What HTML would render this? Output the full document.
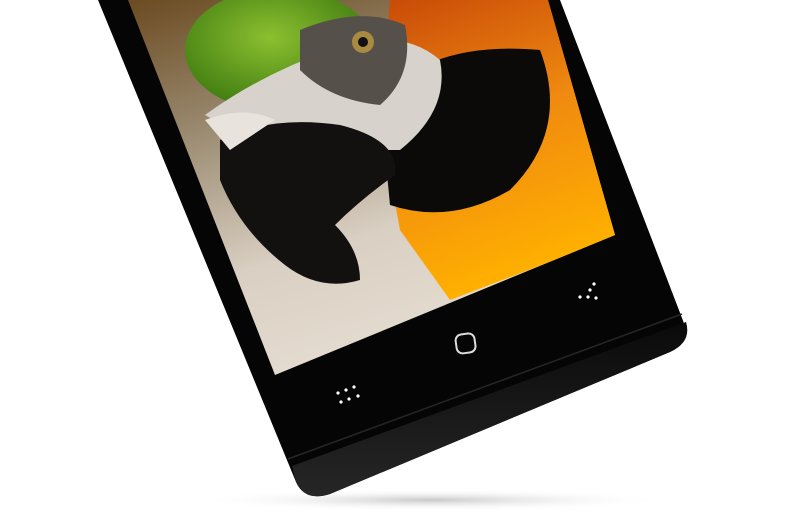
<!DOCTYPE html>
<html><head><style>
html,body{margin:0;padding:0;background:#fff;width:800px;height:525px;overflow:hidden}
</style></head><body>
<svg width="800" height="525" viewBox="0 0 800 525" xmlns="http://www.w3.org/2000/svg">
<defs>
<radialGradient id="sh" cx="0.5" cy="0.5" r="0.5"><stop offset="0" stop-color="#c8c8c8"/><stop offset="1" stop-color="#fff" stop-opacity="0"/></radialGradient>
<linearGradient id="bg" x1="0" y1="0" x2="0.4" y2="1"><stop offset="0" stop-color="#6a4a20"/><stop offset="0.35" stop-color="#9a8a70"/><stop offset="0.7" stop-color="#d9cfc2"/><stop offset="1" stop-color="#e6ddd2"/></linearGradient>
<linearGradient id="or" x1="0" y1="0" x2="0.3" y2="1"><stop offset="0" stop-color="#c84a08"/><stop offset="0.5" stop-color="#f08a10"/><stop offset="1" stop-color="#ffb000"/></linearGradient>
<radialGradient id="gr" cx="0.45" cy="0.4" r="0.6"><stop offset="0" stop-color="#8cc030"/><stop offset="1" stop-color="#3e7a10"/></radialGradient>
<linearGradient id="band" x1="0" y1="0" x2="0" y2="1"><stop offset="0" stop-color="#0a0a0a"/><stop offset="1" stop-color="#262626"/></linearGradient>
<clipPath id="scr"><polygon points="128,0 548,0 615,235 275,375"/></clipPath>
</defs>
<ellipse cx="430" cy="500" rx="240" ry="11" fill="url(#sh)"/>
<path d="M98,0 L560,0 L682,318 Q692,342 670,352 L330,494 Q305,502 296,482 Z" fill="#050505"/>
<path d="M292,466 L686,322 Q692,342 670,352 L330,494 Q305,502 296,482 Z" fill="url(#band)"/>
<path d="M288,459 L682,314" stroke="#262626" stroke-width="1.5"/>
<g clip-path="url(#scr)">
<rect x="120" y="0" width="500" height="380" fill="url(#bg)"/>
<polygon points="390,0 548,0 620,235 450,300 400,230 380,120" fill="url(#or)"/>
<path d="M380,100 Q430,40 540,50 Q570,130 510,190 Q450,225 390,205 Z" fill="#0c0a08"/>
<ellipse cx="280" cy="50" rx="95" ry="62" fill="url(#gr)"/>
<path d="M205,115 Q260,75 330,50 Q400,25 440,60 Q450,110 400,150 Q330,150 250,140 Z" fill="#d7d2cb"/>
<path d="M300,30 Q360,5 405,25 Q415,75 380,105 Q330,100 300,70 Z" fill="#55504a"/>
<circle cx="363" cy="42" r="11" fill="#a88a40"/><circle cx="363" cy="42" r="5" fill="#111"/>
<path d="M220,140 Q270,115 340,125 Q400,140 395,175 Q360,200 335,225 Q360,250 360,280 Q320,292 285,265 Q240,230 220,180 Z" fill="#121110"/>
<path d="M205,120 Q245,105 275,120 L230,150 Z" fill="#e8e3dc"/>
</g>
<rect x="456" y="334" width="19" height="19" rx="6" fill="none" stroke="#ddd" stroke-width="2" transform="rotate(-8 465 343)"/>
<g fill="#fff">
<circle cx="338" cy="393" r="1.6"/><circle cx="346" cy="390" r="1.6"/><circle cx="354" cy="387" r="1.6"/>
<circle cx="341" cy="402" r="1.6"/><circle cx="349" cy="399" r="1.6"/><circle cx="358" cy="396" r="1.6"/>
<circle cx="594" cy="284" r="1.6"/><circle cx="590" cy="290" r="1.6"/>
<circle cx="580" cy="297" r="1.6"/><circle cx="588" cy="297" r="1.6"/><circle cx="596" cy="298" r="1.6"/>
</g>
</svg>
</body></html>
